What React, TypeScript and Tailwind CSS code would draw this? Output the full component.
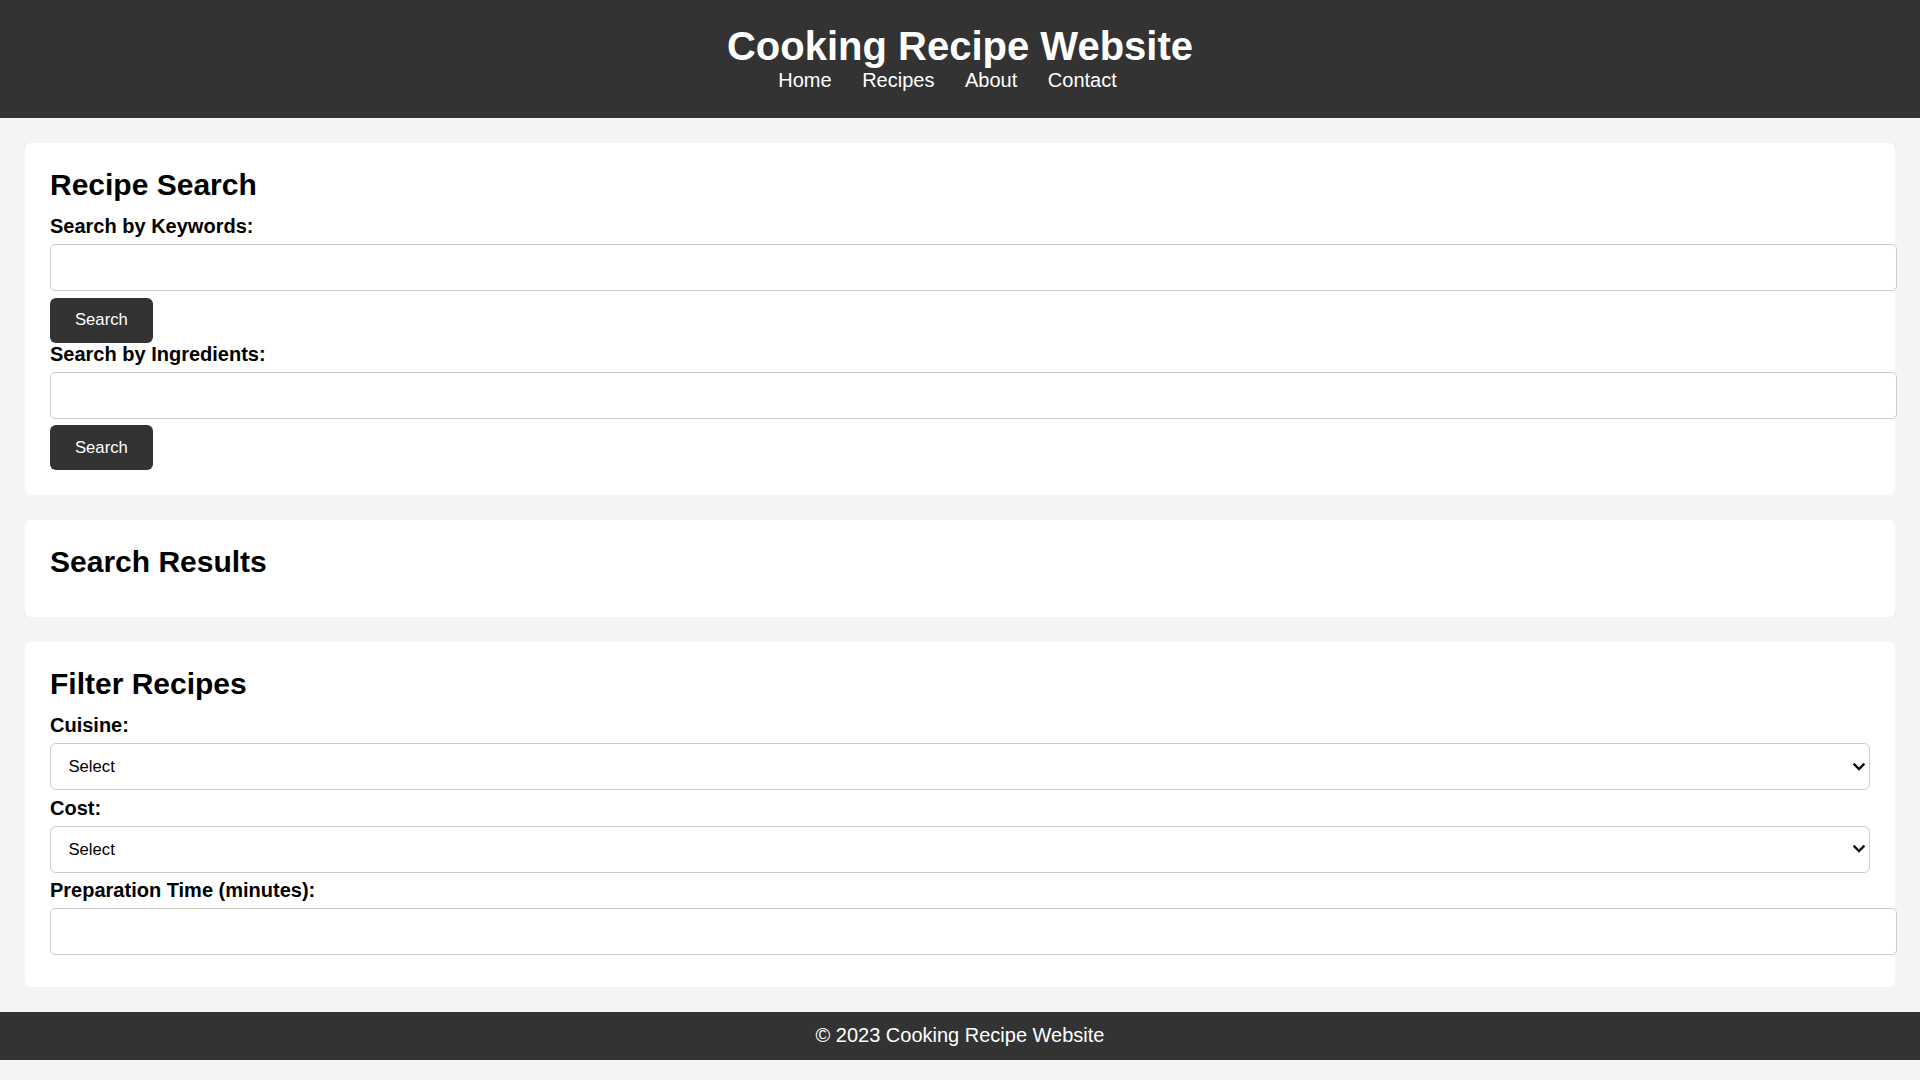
import React from "react";

function Chevron() {
  return (
    <svg
      className="pointer-events-none absolute right-[5px] top-1/2 -translate-y-1/2"
      width="12"
      height="9"
      viewBox="0 0 12 9"
      fill="none"
    >
      <polyline points="1.5,2 6,6.5 10.5,2" stroke="#111" strokeWidth="2.4" strokeLinecap="square" strokeLinejoin="miter" />
    </svg>
  );
}

function Label({ children }: { children: React.ReactNode }) {
  return <label className="block font-bold text-[20px] leading-[23px] mb-[6.25px]">{children}</label>;
}

function TextInput({ type = "text" }: { type?: string }) {
  return (
    <input
      type={type}
      className="block w-[calc(100%+27px)] h-[47px] px-[12.5px] border border-[#cccccc] rounded-[5px] mb-[6.25px] bg-white text-[16.67px] outline-none"
    />
  );
}

function SearchButton() {
  return (
    <button className="block h-[45px] px-[25px] bg-[#333333] text-white rounded-[6px] text-[16.67px] leading-[20px] cursor-pointer">
      Search
    </button>
  );
}

function SelectBox() {
  return (
    <div className="relative mb-[6.25px]">
      <select className="block w-full h-[47px] appearance-none pl-[17.5px] pr-[30px] border border-[#cccccc] rounded-[6px] bg-white text-[16.67px] text-black outline-none">
        <option>Select</option>
      </select>
      <Chevron />
    </div>
  );
}

export default function App() {
  return (
    <div className="min-h-screen bg-[#f4f4f4] text-black text-[20px] font-['Liberation_Sans',Arial,Helvetica,sans-serif]">
      <header className="bg-[#333333] text-white text-center pt-[23px] pb-[26px]">
        <h1 className="text-[40px] font-bold leading-[46px]">Cooking Recipe Website</h1>
        <nav>
          <ul className="leading-[23px] text-[20px]">
            <li className="inline mr-[25px]"><a href="#">Home</a></li>{" "}
            <li className="inline mr-[25px]"><a href="#">Recipes</a></li>{" "}
            <li className="inline mr-[25px]"><a href="#">About</a></li>{" "}
            <li className="inline mr-[25px]"><a href="#">Contact</a></li>
          </ul>
        </nav>
      </header>

      <main className="px-[25px] pt-[25px]">
        <section className="bg-white rounded-[6px] p-[25px] mb-[25px]">
          <h2 className="text-[30px] font-bold leading-[34.5px] mb-[12.5px]">Recipe Search</h2>
          <Label>Search by Keywords:</Label>
          <TextInput />
          <SearchButton />
          <Label>Search by Ingredients:</Label>
          <TextInput />
          <SearchButton />
        </section>

        <section className="bg-white rounded-[6px] p-[25px] mb-[25px]">
          <h2 className="text-[30px] font-bold leading-[34.5px] mb-[12.5px]">Search Results</h2>
        </section>

        <section className="bg-white rounded-[6px] p-[25px] mb-[25px]">
          <h2 className="text-[30px] font-bold leading-[34.5px] mb-[12.5px]">Filter Recipes</h2>
          <Label>Cuisine:</Label>
          <SelectBox />
          <Label>Cost:</Label>
          <SelectBox />
          <Label>Preparation Time (minutes):</Label>
          <TextInput type="number" />
        </section>
      </main>

      <footer className="bg-[#333333] text-white text-center py-[12.5px] leading-[23px] text-[20px]">
        © 2023 Cooking Recipe Website
      </footer>
    </div>
  );
}
